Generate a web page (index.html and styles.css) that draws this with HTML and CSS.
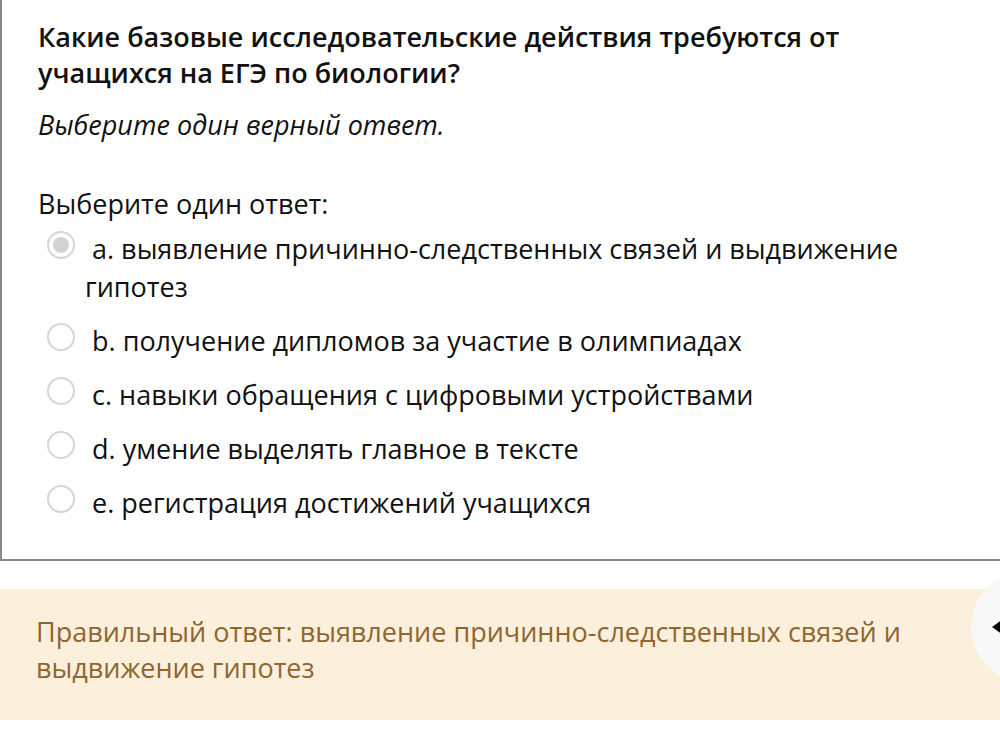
FILE: index.html
```html
<!DOCTYPE html>
<html lang="ru">
<head>
<meta charset="utf-8">
<link rel="stylesheet" href="styles.css">
</head>
<body>
<div class="page">
  <div class="formulation">
    <h2 class="qtext">Какие базовые исследовательские действия требуются от учащихся на ЕГЭ по биологии?</h2>
    <p class="hint">Выберите один верный ответ.</p>
    <div class="prompt">Выберите один ответ:</div>
    <div class="answers">
      <div class="option">
        <span class="radio checked"></span>
        <span class="label">&nbsp;a. выявление причинно-следственных связей и выдвижение гипотез</span>
      </div>
      <div class="option">
        <span class="radio"></span>
        <span class="label">&nbsp;b. получение дипломов за участие в олимпиадах</span>
      </div>
      <div class="option">
        <span class="radio"></span>
        <span class="label">&nbsp;c. навыки обращения с цифровыми устройствами</span>
      </div>
      <div class="option">
        <span class="radio"></span>
        <span class="label">&nbsp;d. умение выделять главное в тексте</span>
      </div>
      <div class="option">
        <span class="radio"></span>
        <span class="label">&nbsp;e. регистрация достижений учащихся</span>
      </div>
    </div>
  </div>
  <div class="outcome">Правильный ответ: выявление причинно-следственных связей и выдвижение гипотез</div>
  <div class="nav-btn"><span class="arrow"></span></div>
</div>
</body>
</html>
```

FILE: styles.css
```css
html, body {
  margin: 0;
  padding: 0;
  background: #fff;
  overflow: hidden;
}
body {
  font-family: "Open Sans", "Liberation Sans", sans-serif;
  color: #111;
  width: 1000px;
  height: 752px;
}
.page {
  position: relative;
  height: 752px;
  overflow: hidden;
}
.formulation {
  border-left: 2px solid #8a8a8a;
  border-bottom: 2px solid #8a8a8a;
  padding: 19px 20px 37px 36px;
}
.qtext {
  margin: 0;
  font-size: 27px;
  font-weight: 600;
  line-height: 36px;
  width: 900px;
}
.hint {
  margin: 16px 0 0;
  font-size: 27px;
  font-style: italic;
  line-height: 36px;
}
.prompt {
  margin-top: 43px;
  font-size: 27px;
  line-height: 36px;
}
.answers {
  display: flex;
  flex-direction: column;
  gap: 16px;
  margin-top: 8px;
}
.option {
  display: flex;
  align-items: flex-start;
  padding-left: 9px;
}
.radio {
  flex: none;
  width: 24px;
  height: 24px;
  border: 2px solid #d6d6d6;
  border-radius: 50%;
  background: #fff;
  margin-top: 1px;
  margin-right: 10px;
  display: flex;
  align-items: center;
  justify-content: center;
}
.radio.checked::after {
  content: "";
  width: 16px;
  height: 16px;
  border-radius: 50%;
  background: #d2d2d2;
}
.label {
  font-size: 27px;
  line-height: 38px;
}
.outcome {
  margin-top: 28px;
  background: #fcefdc;
  color: #8e662e;
  font-size: 27px;
  line-height: 36px;
  padding: 25px 90px 34px 36px;
}
.nav-btn {
  position: absolute;
  left: 971px;
  top: 572px;
  width: 110px;
  height: 110px;
  border-radius: 50%;
  background: #f8f8f8;
  display: flex;
  align-items: center;
  padding-left: 21px;
  box-sizing: border-box;
}
.arrow {
  width: 0;
  height: 0;
  border-top: 10px solid transparent;
  border-bottom: 10px solid transparent;
  border-right: 14px solid #000;
}
```
